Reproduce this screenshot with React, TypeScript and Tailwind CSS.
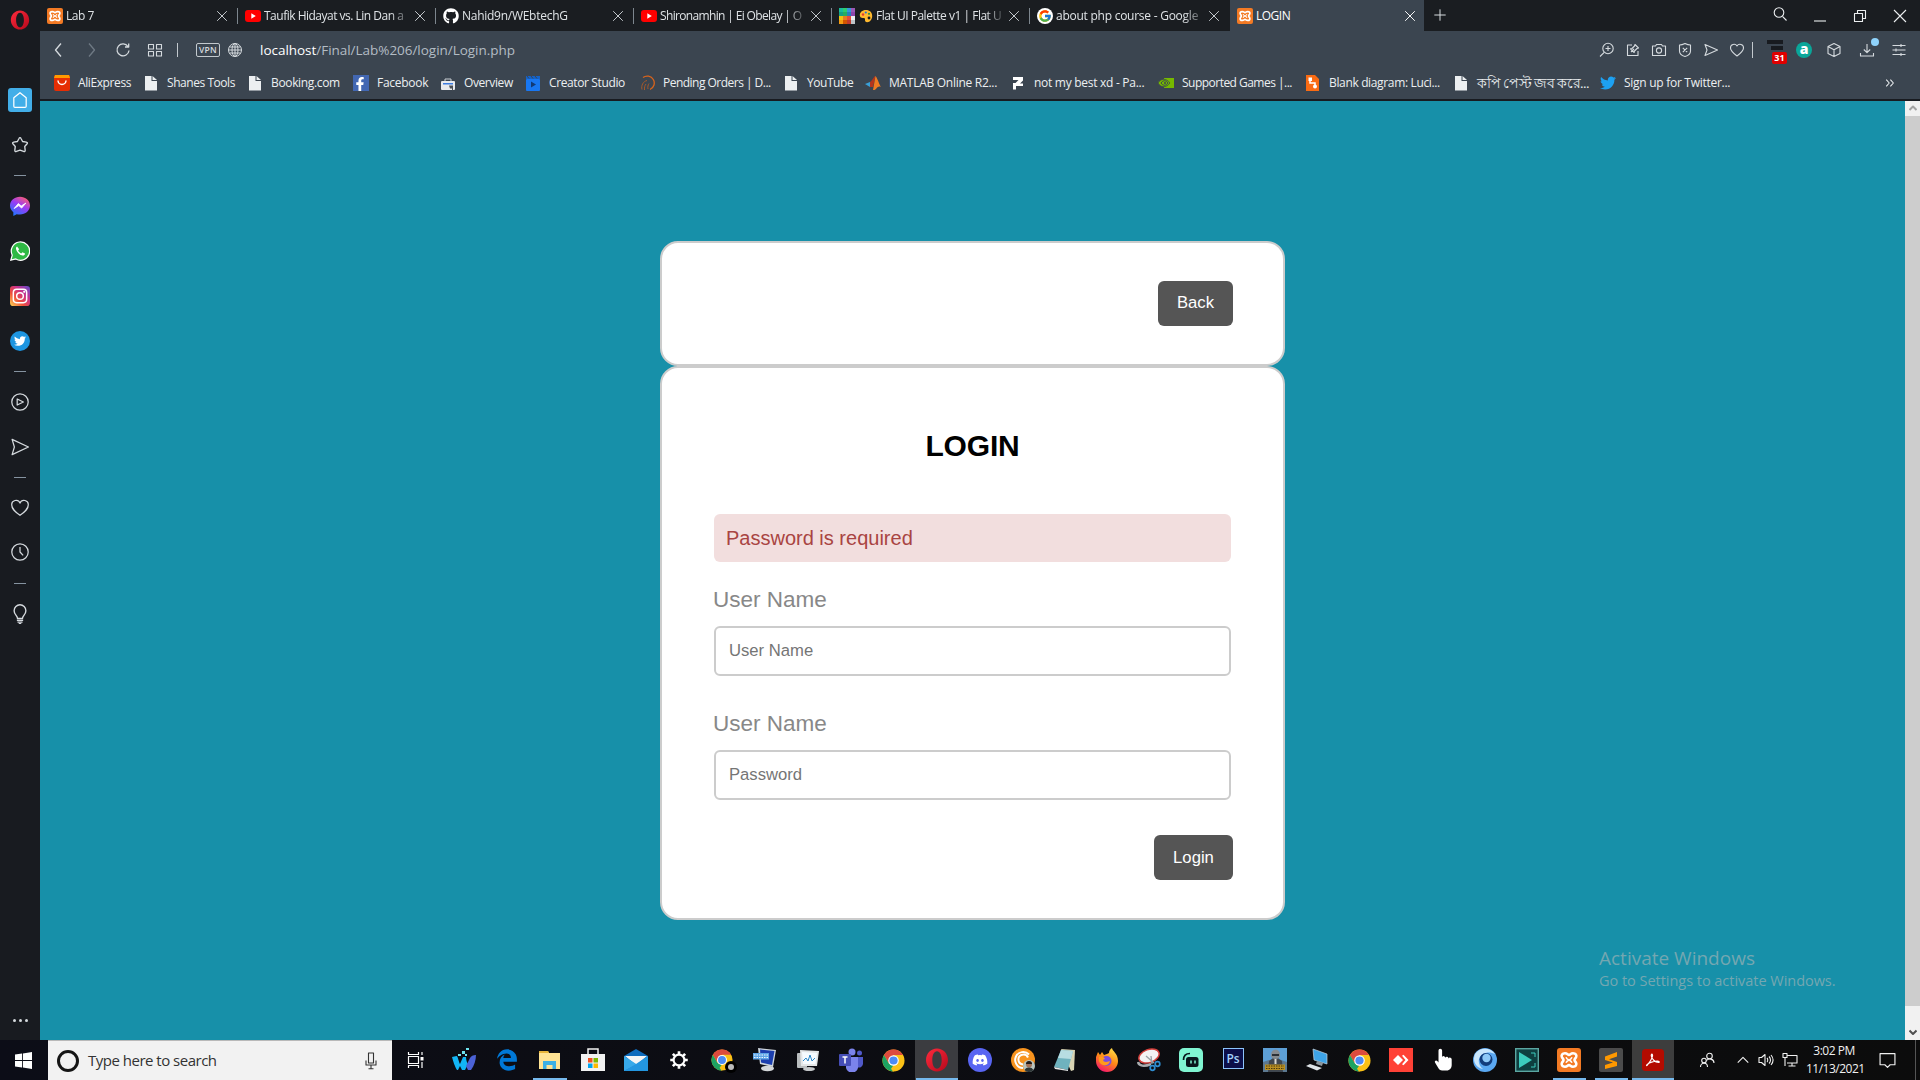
import React, { ReactNode } from "react";
import { FaGithub, FaTwitter, FaDiscord, FaFacebookF } from "react-icons/fa";
import { FaEdgeLegacy } from "react-icons/fa6";
import { FcGoogle } from "react-icons/fc";

type P = { className?: string; children?: ReactNode; box?: string; sw?: number };

/* Thin outlined glyph used across the toolbar and sidebar */
function Line({ className = "size-4", children, box = "0 0 16 16", sw = 1.1 }: P) {
  return (
    <svg className={className} viewBox={box} fill="none" stroke="currentColor" strokeWidth={sw} strokeLinejoin="round">
      {children}
    </svg>
  );
}
function Art({ className = "size-6", children, box = "0 0 24 24" }: P) {
  return (
    <svg className={className} viewBox={box}>
      {children}
    </svg>
  );
}

const Xampp = ({ className = "size-4" }: P) => (
  <Art className={className}>
    <rect width="24" height="24" rx="3" fill="#f37a24" />
    <path
      d="M8 5.300c-2.800 0-4 2-3 4 .6 1.100 1.500 1.700 1.500 2.700s-.9 1.600-1.500 2.700c-1 2 .2 4 3 4 2.400 0 2.600-1.600 4-1.600s1.600 1.600 4 1.600c2.800 0 4-2 3-4-.6-1.100-1.500-1.700-1.500-2.700s.9-1.600 1.500-2.700c1-2-.2-4-3-4-2.400 0-2.600 1.600-4 1.600S10.400 5.300 8 5.300z"
      fill="none"
      stroke="#fff"
      strokeWidth="2.600"
      strokeLinejoin="round"
    />
    <path d="M9 9.200c.8 1.800 1.600 2.300 3 2.800 1.400-.5 2.200-1 3-2.800M9 14.800c.8-1.800 1.600-2.300 3-2.800 1.400.5 2.200 1 3 2.800" fill="none" stroke="#fff" strokeWidth="1.600" />
  </Art>
);
const YouTube = () => (
  <Art className="size-4" box="0 0 16 16">
    <rect y="2" width="16" height="12" rx="3" fill="#f00" />
    <path d="M6.300 5.200v5.600L10.800 8z" fill="#fff" />
  </Art>
);
const FlatPalette = () => (
  <Art className="size-4" box="0 0 16 16">
    <path fill="#1abc9c" d="M0 0h4v4H0z" />
    <path fill="#2ecc71" d="M4 0h4v4H4z" />
    <path fill="#3498db" d="M8 0h4v4H8z" />
    <path fill="#9b59b6" d="M12 0h4v4h-4z" />
    <path fill="#16a085" d="M0 4h4v4H0z" />
    <path fill="#27ae60" d="M4 4h4v4H4z" />
    <path fill="#2980b9" d="M8 4h4v4H8z" />
    <path fill="#8e44ad" d="M12 4h4v4h-4z" />
    <path fill="#f1c40f" d="M0 8h4v4H0z" />
    <path fill="#e67e22" d="M4 8h4v4H4z" />
    <path fill="#e74c3c" d="M8 8h4v4H8z" />
    <path fill="#ecf0f1" d="M12 8h4v4h-4z" />
    <path fill="#f39c12" d="M0 12h4v4H0z" />
    <path fill="#d35400" d="M4 12h4v4H4z" />
    <path fill="#c0392b" d="M8 12h4v4H8z" />
    <path fill="#bdc3c7" d="M12 12h4v4h-4z" />
  </Art>
);
const Painter = () => (
  <Art className="h-3.5 w-3.5 shrink-0" box="0 0 14 14">
    <path d="M7 1C3 1 .8 3.500.8 6.300c0 2.400 2 2.900 3.400 2.700 1.300-.2 2 .4 1.800 1.500-.2 1.500.5 2.700 2.200 2.700 3 0 5-3 5-6.200C13.200 3.300 10.600 1 7 1z" fill="#ffb92e" />
    <circle cx="4" cy="5.500" r="1.200" fill="#e53935" />
    <circle cx="6.800" cy="3.500" r="1.100" fill="#1e6fd9" />
    <circle cx="10" cy="4.800" r="1.100" fill="#2b9348" />
    <circle cx="10" cy="9" r="1.400" fill="#1a1d21" />
  </Art>
);
const Page = () => (
  <Art className="size-4" box="0 0 16 16">
    <path d="M2 1h6.500v5H14v9.500H2z" fill="#eceff1" />
    <path d="M9.500 1v4H14z" fill="#eceff1" />
  </Art>
);
const OperaLogo = ({ className = "size-5" }: P) => (
  <Art className={className}>
    <defs>
      <linearGradient id="op" x1="0" y1="0" x2="1" y2="1">
        <stop offset="0" stopColor="#ff2b3d" />
        <stop offset="1" stopColor="#b4081b" />
      </linearGradient>
    </defs>
    <path
      fillRule="evenodd"
      fill="url(#op)"
      d="M12 .5C5.900.5 1 5.600 1 12s4.900 11.500 11 11.500S23 18.400 23 12 18.100.5 12 .5zm0 2.700c2.900 0 4.700 3.900 4.700 8.800s-1.800 8.800-4.700 8.800S7.300 16.900 7.300 12 9.100 3.200 12 3.200z"
    />
  </Art>
);
const Chrome = ({ className = "size-6" }: P) => (
  <Art className={className}>
    <circle cx="12" cy="12" r="11.500" fill="#fbc116" />
    <path d="M2 6.300A11.500 11.500 0 0 1 22 6.300H12L7 14.800z" fill="#dd4b3e" />
    <path d="M2 6.300 7 14.900 12 17.500l-.6 6A11.500 11.500 0 0 1 2 6.300z" fill="#1da362" />
    <path d="M17 14.800 12 23.500h-.6l-2-3L12 17z" fill="#fbc116" />
    <circle cx="12" cy="12" r="5.500" fill="#fff" />
    <circle cx="12" cy="12" r="4.300" fill="#4c8bf5" />
  </Art>
);

type Tab = { w: string; icon: ReactNode; label: string; text?: string };
const tabs: Tab[] = [
  { w: "w-[198px]", icon: <Xampp />, label: "Lab 7", text: "tracking-[-0.5px]" },
  { w: "w-[198px]", icon: <YouTube />, label: "Taufik Hidayat vs. Lin Dan a", text: "tracking-[-0.5px]" },
  { w: "w-[198px]", icon: <FaGithub className="size-4 text-white" />, label: "Nahid9n/WEbtechG", text: "tracking-[-0.27px]" },
  { w: "w-[198px]", icon: <YouTube />, label: "Shironamhin | Ei Obelay | O", text: "tracking-[-0.65px]" },
  { w: "w-[198px]", icon: <FlatPalette />, label: "Flat UI Palette v1 | Flat U", text: "tracking-[-0.48px]" },
  { w: "w-[200px]", icon: <FcGoogle className="size-4 rounded-full bg-white p-px" />, label: "about php course - Google", text: "tracking-[-0.25px]" },
];

function TabBar() {
  return (
    <div className="flex h-[31px] bg-[#1a1d21] text-[12px] text-[#dfe3e6]">
      {tabs.map((t, i) => (
        <div key={t.label} className={`flex h-full shrink-0 items-center pl-[7px] ${t.w}`}>
          {t.icon}
          {i === 4 && <span className="ml-1 flex"><Painter /></span>}
          <span
            className={`ml-[3px] flex-1 overflow-hidden whitespace-nowrap [mask-image:linear-gradient(to_right,black_88%,#0004)] ${t.text ?? ""}`}
          >
            {t.label}
          </span>
          <Line className="ml-1.5 size-3.5 text-[#c9ced2]">
            <path d="M2.500 2.500l11 11M13.500 2.500l-11 11" />
          </Line>
          <span className={`ml-2 h-4 w-px ${i === 5 ? "bg-transparent" : "bg-[#7d868e]"}`} />
        </div>
      ))}
      <div className="flex h-full w-[194px] shrink-0 items-center bg-[#3b4550] pl-[7px] text-white">
        <Xampp />
        <span className="ml-[3px] flex-1 tracking-[-0.5px]">LOGIN</span>
        <Line className="mr-[7px] size-3.5">
          <path d="M2.500 2.500l11 11M13.500 2.500l-11 11" />
        </Line>
      </div>
      <div className="flex flex-1 items-center pl-[9px]">
        <Line className="mt-[-2px] size-3.5">
          <path d="M8 1.500v13M1.500 8h13" />
        </Line>
      </div>
      <div className="flex items-center pr-[12px] text-[#eceff1]">
        <Line className="mt-[-3px] mr-6 size-4">
          <circle cx="7" cy="6.500" r="4.800" />
          <path d="M10.500 10.300l4 4.200" />
        </Line>
        <Line className="mr-6 size-4">
          <path d="M2 13h12" />
        </Line>
        <Line className="mr-6 size-4">
          <path d="M2.500 5.500h8v8h-8zM5.500 5.500v-3h8v8h-3" />
        </Line>
        <Line className="size-4">
          <path d="M2 2l12 12M14 2L2 14" />
        </Line>
      </div>
    </div>
  );
}

function AddressBar() {
  return (
    <div className="flex h-[38px] items-center pl-[11px] text-[#d5dade]">
      <Line sw={1.300}>
        <path d="M10 1.500L4.500 8l5.500 6.500" />
      </Line>
      <Line className="ml-4 size-4 text-[#6f7a84]" sw={1.300}>
        <path d="M6 1.500L11.500 8 6 14.500" />
      </Line>
      <Line className="ml-4 size-4" sw={1.300}>
        <path d="M13 4.500A6 6 0 1 0 14 8.500M13.700 1.500v3.500H10" />
      </Line>
      <Line className="ml-4 size-4">
        <path d="M1.500 2.500h5v4.500h-5zM9.500 2.500h5v4.500h-5zM1.500 9.500h5v4.500h-5zM9.500 9.500h5v4.500h-5z" />
      </Line>
      <span className="ml-[14px] h-3.5 w-px bg-[#c3c9ce]" />
      <span className="ml-[18px] flex h-[14px] w-6 items-center justify-center rounded-[2px] border border-[#c3c9ce] text-[8.500px] font-semibold tracking-[0.3px]">
        VPN
      </span>
      <Line className="ml-[7px] size-4" sw={1}>
        <circle cx="8" cy="8" r="6.500" />
        <ellipse cx="8" cy="8" rx="3" ry="6.500" />
        <path d="M8 1.500v13M1.500 8h13M2.500 5h11M2.500 11h11" />
      </Line>
      <span className="ml-[17px] text-[13.500px] tracking-[-0.03px] text-[#b3bcc4]">
        <span className="text-white">localhost</span>/Final/Lab%206/login/Login.php
      </span>
      <div className="ml-auto flex items-center gap-2.5 pr-[13px]">
        <Line>
          <circle cx="9" cy="6.500" r="5.200" />
          <path d="M5.200 10.300L1 14.500M9 4v5M6.500 6.500h5" />
        </Line>
        <Line>
          <path d="M7 3H2.500v10.500H13V9M6 10l3-3M10 2.500l3.500 3.500-1.500.5-2.500 2.500-.3 1.500-3.700-3.700 1.500-.3L9.500 4z" />
        </Line>
        <Line>
          <path d="M1.500 4h3l1-1.500h5l1 1.500h3v9.500h-13z" />
          <circle cx="8" cy="8.500" r="2.600" />
        </Line>
        <Line>
          <path d="M8 1.500c2 1 4 1.500 5.500 1.500v6c0 3-2.500 4.700-5.500 5.500-3-.8-5.500-2.500-5.500-5.500V3C4 3 6 2.500 8 1.500zM5.800 5.800l4.400 4.400M10.200 5.800l-4.400 4.400" />
        </Line>
        <Line>
          <path d="M2 2.500L14.500 8 2 13.500 4 8z" />
        </Line>
        <Line>
          <path d="M8 14C4 11 1.500 9 1.500 6A3.500 3.500 0 0 1 8 4a3.500 3.500 0 0 1 6.500 2C14.500 9 12 11 8 14z" />
        </Line>
        <span className="-ml-[3px] h-4 w-px bg-[#c3c9ce]" />
        <span className="relative ml-1 mr-px h-5 w-4">
          <span className="absolute top-0 left-0 h-1 w-4 bg-[#181b20]" />
          <span className="absolute top-1.5 left-1 h-1 w-3 bg-[#181b20]" />
          <span className="absolute top-3 left-[5px] flex h-3 w-[15px] items-center justify-center rounded-[2px] bg-[#e00000] text-[9px] font-bold text-white">
            31
          </span>
        </span>
        <span className="ml-[2px] flex size-4 items-center justify-center rounded-full bg-[#0aa699] pb-0.5 text-[14px] leading-none font-extrabold text-white">
          a
        </span>
        <Line className="ml-1 size-4">
          <path d="M8 1.500l6 3v7l-6 3-6-3v-7zM2 4.500l6 3.200 6-3.200M8 7.700v6.800" />
        </Line>
        <span className="relative mr-1.5 ml-[7px] flex">
          <Line>
            <path d="M8 2v8.500M4.800 7.500L8 10.700l3.200-3.200M1.500 11v3h13v-3" />
          </Line>
          <span className="absolute -top-[4px] left-[12px] size-2 rounded-full bg-[#8fd3fb]" />
        </span>
        <Line>
          <path d="M1.500 3.500h13M1.500 8h13M1.500 12.500h13M10 2v3M5 6.500v3M10 11v3" />
        </Line>
      </div>
    </div>
  );
}

type Mark = { w: string; icon: ReactNode; label: string; t?: string };
const marks: Mark[] = [
  {
    w: "w-[89px]",
    label: "AliExpress",
    t: "tracking-[-0.4px]",
    icon: (
      <Art className="size-4" box="0 0 16 16">
        <rect width="16" height="16" rx="2" fill="#e62e04" />
        <path d="M1 0h14l1 3H0z" fill="#ff9a00" />
        <path d="M4 5.500a4 4 0 0 0 8 0" fill="none" stroke="#fff" strokeWidth="1.500" />
      </Art>
    ),
  },
  { w: "w-[104px]", label: "Shanes Tools", t: "tracking-[-0.45px]", icon: <Page /> },
  { w: "w-[106px]", label: "Booking.com", t: "tracking-[-0.35px]", icon: <Page /> },
  {
    w: "w-[87px]",
    label: "Facebook",
    icon: (
      <span className="flex size-4 items-end justify-end bg-[#4267b2]">
        <FaFacebookF className="mr-0.5 size-3.5 text-white" />
      </span>
    ),
  },
  {
    w: "w-[85px]",
    label: "Overview",
    t: "tracking-[-0.4px]",
    icon: (
      <Art className="size-4" box="0 0 16 16">
        <path d="M5 6V4h6v2" fill="none" stroke="#c9ced2" />
        <rect x="1" y="6" width="14" height="9" rx="1" fill="#e8eaed" />
        <path d="M3 8h10v1.500H3z" fill="#3d7de0" />
        <path d="M9 10.500h4v5h-1v-2h-2z" fill="#4a4f55" />
      </Art>
    ),
  },
  {
    w: "w-[114px]",
    label: "Creator Studio",
    t: "tracking-[-0.38px]",
    icon: (
      <Art className="size-4" box="0 0 16 16">
        <rect x="1" y="4" width="14" height="12" rx="1" fill="#1877f2" />
        <path d="M1 1h14v3H1z" fill="#1462c9" />
        <path d="M2 1l2 2.500M6 1l2 2.500M10 1l2 2.500" stroke="#3b4550" strokeWidth="1" />
        <path d="M6 6.500v6L11 9.500z" fill="#123a75" />
      </Art>
    ),
  },
  {
    w: "w-[144px]",
    label: "Pending Orders | D...",
    t: "tracking-[-0.52px]",
    icon: (
      <Art className="size-4" box="0 0 16 16">
        <path d="M4 2.500A7 7 0 1 1 11 14.500" fill="none" stroke="#d9641c" strokeWidth="1.300" />
        <path d="M3 14.500c-1-4 1-8 5-9M5.500 15c0-3 0-4 1.500-6M9 14c-.5-2 0-4 1-5.500" fill="none" stroke="#a85a2a" />
      </Art>
    ),
  },
  { w: "w-[82px]", label: "YouTube", t: "tracking-[-0.45px]", icon: <Page /> },
  {
    w: "w-[145px]",
    label: "MATLAB Online R2...",
    t: "tracking-[-0.28px]",
    icon: (
      <Art className="size-4" box="0 0 16 16">
        <path d="M0 9l5-2 3 2-3 3z" fill="#3aa0d8" />
        <path d="M5 7c2-1 4-6 5.500-6L8 12l-3 0z" fill="#b5351c" />
        <path d="M10.500 1C12 2 14 9 16 12c-2-1-3-.5-5 2-1 1-2 1-3 1z" fill="#f07c22" />
      </Art>
    ),
  },
  {
    w: "w-[148px]",
    label: "not my best xd - Pa...",
    icon: (
      <Art className="size-4" box="0 0 16 16">
        <path d="M3 2h10v3.500l-3 3h3V11H6v3.500H3V8h2.500l3-3H3z" fill="#fff" />
      </Art>
    ),
  },
  {
    w: "w-[147px]",
    label: "Supported Games |...",
    t: "tracking-[-0.52px]",
    icon: (
      <Art className="size-4" box="0 0 16 16">
        <path d="M6 3h10v10H6z" fill="#76b900" />
        <path d="M0 8c3-5 8-5 12 0-4 5-9 5-12 0z" fill="#76b900" stroke="#3b4550" strokeWidth=".8" />
        <path d="M3 8c2-3 5-3 7 0-2 3-5 3-7 0z" fill="none" stroke="#3b4550" />
        <circle cx="7" cy="8" r="1" fill="#3b4550" />
      </Art>
    ),
  },
  {
    w: "w-[148px]",
    label: "Blank diagram: Luci...",
    t: "tracking-[-0.35px]",
    icon: (
      <Art className="size-4" box="0 0 16 16">
        <path d="M1 0h9l4 4v12H1z" fill="#f96b13" />
        <path d="M5 4v4h5v3" fill="none" stroke="#fff" strokeWidth="1.500" />
        <rect x="3.500" y="2.500" width="3.500" height="3.500" fill="#fff" />
        <circle cx="10" cy="11.500" r="2" fill="#fff" />
      </Art>
    ),
  },
  { w: "w-[147px]", label: "কপি পেস্ট জব করে...", t: "text-[13.5px] leading-4 font-medium tracking-[-0.5px]", icon: <Page /> },
  { w: "w-[150px]", label: "Sign up for Twitter...", icon: <FaTwitter className="size-4 text-[#1da1f2]" /> },
];

function Bookmarks() {
  return (
    <div className="flex h-[28px] items-center pl-[14px] text-[12px] tracking-[-0.28px] text-[#eceff1]">
      {marks.map((m) => (
        <div key={m.label} className={`flex shrink-0 items-center gap-2 whitespace-nowrap ${m.w}`}>
          <span className="flex size-4 shrink-0">{m.icon}</span>
          <span className={m.t ?? ""}>{m.label}</span>
        </div>
      ))}
      <Line className="mr-6 ml-auto size-3" sw={1.400}>
        <path d="M3 3.500L7 8l-4 4.500M8.500 3.500l4 4.500-4 4.500" />
      </Line>
    </div>
  );
}

const Dash = ({ className = "" }: P) => <span className={`h-px w-3 bg-[#8593a0] ${className}`} />;

function Sidebar() {
  return (
    <aside className="flex w-10 shrink-0 flex-col items-center bg-[#181b20] text-[#d5dade]">
      <OperaLogo className="mt-[10px] size-5" />
      <span className="mt-[58px] flex h-6 w-6 items-center justify-center rounded-[3px] bg-[#42aee8] text-white">
        <Line className="size-[18px]">
          <path d="M2.500 6L8 1.500 13.500 6v7.500a1 1 0 0 1-1 1h-9a1 1 0 0 1-1-1z" />
        </Line>
      </span>
      <Line className="mt-[24px] size-[18px]" sw={1.200}>
        <path d="M8 1.500Q8.600 1.500 9 2.400L10.300 4.900 13.600 5.400Q15.200 5.800 14.300 6.900L12.200 9.300 12.600 12.600Q12.600 14.300 11.200 13.700L8 12.500 4.800 13.700Q3.400 14.300 3.400 12.600L3.800 9.300 1.700 6.900Q.8 5.800 2.400 5.400L5.700 4.900 7 2.400Q7.400 1.500 8 1.500z" />
      </Line>
      <Dash className="mt-[21px]" />
      <Art className="mt-5 size-5">
        <defs>
          <linearGradient id="ms" x1=".2" y1="1" x2=".8" y2="0">
            <stop offset="0" stopColor="#1a78ff" />
            <stop offset=".55" stopColor="#9a3bf5" />
            <stop offset="1" stopColor="#ff5f6d" />
          </linearGradient>
        </defs>
        <path d="M12 1C5.500 1 0 5.600 0 11.500c0 3.500 1.500 6 4 8V24l4-2.200c1.300.3 2.600.5 4 .5 6.500 0 12-4.800 12-10.800S18.500 1 12 1z" fill="url(#ms)" />
        <path d="M5 15l5-6 3.500 3L19 8.500l-5 6-3.500-3z" fill="#fff" stroke="#fff" strokeLinejoin="round" />
      </Art>
      <Art className="mt-[25px] size-5">
        <path d="M1 23l1.700-6A11 11 0 1 1 7 21.600z" fill="#2fb944" stroke="#fff" strokeWidth="1.500" />
        <path d="M8.500 6.500c-2 1-1.500 3.500 0 6s4 4.500 6.500 5c2 .3 3.300-1.500 3-2.500l-3-1.500-1.500 1.500c-1.500-.5-3-2-3.800-3.600L11 10z" fill="#fff" />
      </Art>
      <Art className="mt-[25px] size-5">
        <defs>
          <linearGradient id="ig" x1="0" y1="1" x2="1" y2="0">
            <stop offset="0" stopColor="#feda55" />
            <stop offset=".35" stopColor="#f0503a" />
            <stop offset=".65" stopColor="#c8318d" />
            <stop offset="1" stopColor="#5a4fd0" />
          </linearGradient>
        </defs>
        <rect width="24" height="24" rx="4" fill="url(#ig)" />
        <rect x="4" y="4" width="16" height="16" rx="4" fill="none" stroke="#fff" strokeWidth="1.800" />
        <circle cx="12" cy="12" r="4" fill="none" stroke="#fff" strokeWidth="1.800" />
        <circle cx="17" cy="7" r="1.300" fill="#fff" />
      </Art>
      <span className="mt-[25px] flex size-5 shrink-0 items-center justify-center rounded-full bg-[#1d95e0]">
        <FaTwitter className="size-3 text-white" />
      </span>
      <Dash className="mt-[20px]" />
      <Line className="mt-[21px] size-[18px]">
        <circle cx="8" cy="8" r="7.300" />
        <path d="M5.500 5.300v5.400L11 8z" />
      </Line>
      <Line className="mt-[27px] size-[18px]">
        <path d="M1 1.200L15.500 8 1 14.800 3 8z" />
      </Line>
      <Dash className="mt-[21px]" />
      <Line className="mt-[21px] size-[18px]">
        <path d="M8 14.500C4 11.500.7 9 .7 5.500A3.800 3.800 0 0 1 8 3.600a3.800 3.800 0 0 1 7.300 1.900C15.300 9 12 11.500 8 14.500z" />
      </Line>
      <Line className="mt-[26px] size-[18px]">
        <circle cx="8" cy="8" r="7.300" />
        <path d="M8 3.500V8l2.800 3" />
      </Line>
      <Dash className="mt-[22px]" />
      <Line className="mt-[20px] size-5">
        <path d="M6 11.500C6 9.500 3.300 8.500 3.300 5.300a4.700 4.700 0 0 1 9.400 0C12.700 8.500 10 9.500 10 11.500zM5.500 13h5M6 14.500h4M7 15.700h2" />
      </Line>
      <span className="mt-auto mb-[18px] flex gap-[3px]">
        <i className="size-[3px] rounded-full bg-[#d5dade]" />
        <i className="size-[3px] rounded-full bg-[#d5dade]" />
        <i className="size-[3px] rounded-full bg-[#d5dade]" />
      </span>
    </aside>
  );
}

function Field({ label, hint }: { label: string; hint: string }) {
  return (
    <label className="block">
      <span className="-ml-px block h-[26px] text-[22.500px] leading-[26px] text-[#888]">{label}</span>
      <span className="mt-[13px] flex h-[50px] items-center rounded-[6px] border-2 border-[#ccc] bg-white px-[13px] pb-px text-[16.670px] text-[#757575]">
        {hint}
      </span>
    </label>
  );
}

function PageBody() {
  return (
    <main className="relative flex flex-1 bg-[#1790a9] font-['Liberation_Sans',Arial,sans-serif]">
      <div className="flex flex-1 flex-col items-center pt-[140px]">
        <section className="flex h-[125px] w-[625px] justify-end rounded-[18px] border-2 border-[#ccc] bg-white pt-[38px] pr-[50px]">
          <button className="flex h-[45px] w-[75px] items-center justify-center rounded-[6px] bg-[#555] pb-0.5 text-[16.670px] text-white">
            Back
          </button>
        </section>
        <section className="flex h-[554px] w-[625px] flex-col rounded-[18px] border-2 border-[#ccc] bg-white px-[52px] pt-[60px]">
          <h2 className="h-9 text-center text-[30px] leading-9 font-bold tracking-[-0.15px] text-black">LOGIN</h2>
          <p className="mt-[50px] flex h-12 items-center rounded-[6px] bg-[#f2dede] pl-[12px] text-[20px] text-[#a94442]">
            Password is required
          </p>
          <div className="mt-[25px] flex flex-col gap-[35px]">
            <Field label="User Name" hint="User Name" />
            <Field label="User Name" hint="Password" />
          </div>
          <button className="mt-[35px] -mr-0.5 flex h-[45px] w-[79px] items-center justify-center self-end rounded-[6px] bg-[#555] pb-px text-[16.670px] text-white">
            Login
          </button>
        </section>
      </div>
      <div className="flex w-[15px] flex-col bg-[#f1f1f1]">
        <Line className="mx-auto my-1 h-[7px] w-2 text-[#a3a3a3]" box="0 0 8 7" sw={2}>
          <path d="M.5 5L4 1.500 7.500 5" />
        </Line>
        <span className="h-[890px] bg-[#cdcdcd]" />
        <Line className="mx-auto mt-auto mb-1 h-[7px] w-2 text-[#505050]" box="0 0 8 7" sw={2}>
          <path d="M.5 1.500L4 5 7.500 1.500" />
        </Line>
      </div>
      <div className="absolute top-[843px] left-[1559px] font-['Open_Sans',sans-serif] whitespace-nowrap text-[#74a7b1]">
        <p className="text-[19px] leading-[28px]">Activate Windows</p>
        <p className="text-[14.500px] leading-[18px] tracking-[-0.03px]">Go to Settings to activate Windows.</p>
      </div>
    </main>
  );
}

const taskA: { n: string; bar?: string; el: ReactNode }[] = [
  {
    n: "waves",
    el: (
      <Art>
        <path d="M0 9l4.500-1C6 8 7 15 8 16l3-7h3c0 3 1 6 2 7l-3 6h-3l-2-4-2 4H5C3 19 1 13 0 9z" fill="#12b5f5" />
        <path d="M15 16l3-6c1-2 3-3 6-3 0 5-2 11-5 15h-3l-2-4z" fill="#4b62d6" />
        <path d="M6 6h3v2H6zM10 3h3v3h-3zM14 0h3v2h-3zM13 6h2v2h-2z" fill="#6fe3ee" />
      </Art>
    ),
  },
  { n: "edge", el: <FaEdgeLegacy className="size-[22px] text-[#0078d7]" /> },
  {
    n: "files",
    bar: "w-[34px]",
    el: (
      <Art>
        <path d="M1 3h9l1 2h11v16H1z" fill="#ffe394" />
        <path d="M1 3h9l1 2H1z" fill="#e8b53a" />
        <path d="M5 13h13v8h-3.500v-4h-6v4H5z" fill="#3bb0e5" />
      </Art>
    ),
  },
  {
    n: "store",
    el: (
      <Art>
        <path d="M7 7V1h10v6" fill="none" stroke="#f2f2f2" strokeWidth="1.500" />
        <path d="M0 6h24v17H0z" fill="#f2f2f2" />
        <path d="M7 10h4.500v4.500H7z" fill="#f25022" />
        <path d="M12.500 10H17v4.500h-4.500z" fill="#7fba00" />
        <path d="M7 15.500h4.500V20H7z" fill="#00a4ef" />
        <path d="M12.500 15.500H17V20h-4.500z" fill="#ffb900" />
      </Art>
    ),
  },
  {
    n: "mail",
    el: (
      <Art>
        <path d="M0 8l12-7 12 7v15H0z" fill="#0f6cbd" />
        <path d="M1 8h22l-11 9z" fill="#f5f5f5" />
        <path d="M0 8l13 8.500L0 23z" fill="#37a9ea" />
        <path d="M24 8v15H0l12-7z" fill="#2396e0" />
      </Art>
    ),
  },
  {
    n: "settings",
    el: (
      <Art className="size-5">
        <g stroke="#fff" fill="none">
          <circle cx="12" cy="12" r="6.500" strokeWidth="2.600" />
          <path d="M12 1.500v4M12 18.500v4M1.500 12h4M18.500 12h4M4.600 4.600l2.800 2.800M16.600 16.600l2.800 2.800M19.400 4.600l-2.800 2.800M7.400 16.600l-2.800 2.800" strokeWidth="3.200" />
        </g>
      </Art>
    ),
  },
  {
    n: "chrome-a",
    el: (
      <span className="relative flex">
        <Chrome className="size-[22px]" />
        <span className="absolute -right-1 -bottom-0.5 flex size-3 items-center justify-center rounded-full bg-black">
          <i className="size-1.5 rounded-full bg-[#bbb]" />
        </span>
      </span>
    ),
  },
  {
    n: "keyboard",
    el: (
      <Art>
        <path d="M5 0l18 2-3 17-13-3z" fill="#cfd6dc" />
        <path d="M7 1.500l14.500 1.500-2.500 14-11-2.500z" fill="#1c3fae" />
        <path d="M0 5h16v6.500H0z" fill="#5fa6e8" />
        <path d="M1 7h14M1 9.500h14" stroke="#fff" strokeWidth=".9" strokeDasharray="1.500 1" />
        <ellipse cx="14.500" cy="20.500" rx="6.500" ry="2.700" fill="#d4d7d9" />
      </Art>
    ),
  },
  {
    n: "monitor",
    el: (
      <Art>
        <rect x="1" y="5" width="10" height="15" rx="1" fill="#b9bdbf" />
        <path d="M4 2l19 1-2 15H5z" fill="#e4e6e7" />
        <path d="M6 4l15 1-1.500 11H7z" fill="#f6fbff" />
        <path d="M7 13l3-3 2 3 2-6 2 6 3-3" fill="none" stroke="#2a86c8" />
        <ellipse cx="13" cy="21" rx="6" ry="2" fill="#c3c6c8" />
      </Art>
    ),
  },
  {
    n: "teams",
    el: (
      <Art>
        <circle cx="13" cy="4" r="3.500" fill="#7b83eb" />
        <circle cx="20.500" cy="5" r="2.500" fill="#5059c9" />
        <path d="M16 9h8v7a4 4 0 0 1-6 3z" fill="#5059c9" />
        <path d="M7 9h12v8a6 6 0 0 1-12 3z" fill="#7b83eb" />
        <rect y="6" width="12" height="12" rx="1" fill="#464eb8" />
        <path d="M3.500 9h5M6 9v6.500" stroke="#fff" strokeWidth="1.500" />
      </Art>
    ),
  },
  { n: "chrome-b", el: <Chrome className="size-[23px]" /> },
  { n: "opera", bar: "w-[42px]", el: <OperaLogo className="size-6" /> },
  {
    n: "discord",
    el: (
      <span className="flex size-6 items-center justify-center rounded-full bg-[#5865f2]">
        <FaDiscord className="size-4 text-white" />
      </span>
    ),
  },
  {
    n: "coin",
    el: (
      <Art>
        <circle cx="12" cy="12" r="12" fill="#f7931e" />
        <path d="M18 6.500A8 8 0 1 0 12 20M17 9.500a5 5 0 1 0-5 7" fill="none" stroke="#fff" strokeWidth="2" />
        <circle cx="18" cy="18" r="6" fill="#b9c4be" />
        <path d="M13.500 22a5 5 0 0 1 9 0 6 6 0 0 1-9 0z" fill="#2c3536" />
        <circle cx="18" cy="16.500" r="3" fill="#a1735a" />
        <path d="M15 16a3 3 0 0 1 6 0z" fill="#201a18" />
      </Art>
    ),
  },
];

const Pubg = (
  <Art>
    <path d="M0 0h24v24H0z" fill="#5d9fd6" />
    <path d="M0 14l6-2h12l6 2v10H0z" fill="#5c7890" />
    <path d="M5 24l1-11 4-3h5l4 3 1 11z" fill="#3f464e" />
    <path d="M8 7a4.500 5.500 0 0 1 9 0c0 3-2 4-4.500 4S8 10 8 7z" fill="#868b90" />
    <path d="M9 6h7v2H9z" fill="#2c3036" />
    <path d="M11.500 11h2v5h-2z" fill="#d9d9d2" />
    <path d="M2 16.500h20v5.500H2z" fill="#b98f22" />
    <path d="M3 18h18M3 20.500h18" stroke="#4b3a0c" strokeWidth="1" strokeDasharray="1.500 1" />
  </Art>
);

const taskB: { n: string; bar?: boolean; on?: boolean; el: ReactNode }[] = [
  {
    n: "notepad",
    el: (
      <Art>
        <path d="M8 1l14 1-1 20-3 1z" fill="#d9d4b4" />
        <path d="M8 2l12 1-5 19L1 19z" fill="#6fb2be" />
        <path d="M8 2l12 1-2 8L5 10z" fill="#b8dde2" />
        <path d="M1 19l14 3v1L2 21z" fill="#e7e9e9" />
      </Art>
    ),
  },
  {
    n: "firefox",
    el: (
      <Art>
        <defs>
          <linearGradient id="ff" x1=".8" y1="0" x2=".3" y2="1">
            <stop offset="0" stopColor="#ffe14a" />
            <stop offset=".5" stopColor="#ff8a16" />
            <stop offset="1" stopColor="#f5156c" />
          </linearGradient>
        </defs>
        <path d="M1 9l2-5 2 3 2-3 2 3c2-1 4-1 5-2 0-2 1-4 3-5 0 3 6 5 6 13a11 11 0 0 1-22 0c0-1 0-3 0-4z" fill="url(#ff)" />
        <circle cx="11.500" cy="13" r="5" fill="#7a4ee0" />
        <path d="M4 9c3-1 5 0 6 2-3 0-2 3 1 3 2 0 3-1 4-1-1 4-4 5-7 4-3-1-5-4-4-8z" fill="#ff9a1c" />
      </Art>
    ),
  },
  {
    n: "snip",
    el: (
      <Art>
        <path d="M1 14c1 4 6 5 13 2" stroke="#a9adb0" fill="none" strokeWidth="2.500" />
        <ellipse cx="12" cy="8" rx="10.500" ry="6.500" transform="rotate(-20 12 8)" fill="#f3f3f3" stroke="#d4403c" strokeWidth="1.500" />
        <path d="M9 8l8 7M14 8l1 8" stroke="#9aa1a6" strokeWidth="1.300" />
        <circle cx="15.500" cy="20" r="2.300" fill="none" stroke="#2f8dd0" strokeWidth="1.700" />
        <circle cx="20.500" cy="16" r="2.300" fill="none" stroke="#2f8dd0" strokeWidth="1.700" />
      </Art>
    ),
  },
  {
    n: "streamlabs",
    el: (
      <Art>
        <rect width="24" height="24" rx="5" fill="#80f5d2" />
        <rect x="7" y="9" width="12.500" height="10" rx="2.500" fill="#09161d" />
        <path d="M4.500 12C4.500 8 7 5.500 11 5.500" fill="none" stroke="#09161d" strokeWidth="1.700" />
        <path d="M12 12.500v3M16 12.500v3" stroke="#80f5d2" strokeWidth="1.500" />
      </Art>
    ),
  },
  {
    n: "photoshop",
    el: (
      <span className="-mt-[3px] flex size-[21px] items-center justify-center border border-[#8cc4fb] bg-[#0c0f4a] text-[12px] font-semibold text-[#a5d2fb]">
        Ps
      </span>
    ),
  },
  { n: "pubg", el: Pubg },
  {
    n: "pc",
    el: (
      <Art>
        <path d="M8 1l14 5v10L9 12z" fill="#3ea4e8" stroke="#c6d3dc" strokeWidth=".7" />
        <path d="M12 13l6 2-1 3-6-2z" fill="#8c969d" />
        <path d="M1 18l4-2 12 4-5 2.500z" fill="#dfe4e8" />
      </Art>
    ),
  },
  { n: "chrome-c", el: <Chrome className="size-[23px]" /> },
  {
    n: "anydesk",
    el: (
      <Art>
        <path d="M0 0h24v24H0z" fill="#ff4136" />
        <path d="M9 7l5 5-5 5-5-5z" fill="#fff" />
        <path d="M13 7.800l1.500-1 5 5.200-5 5.200-1.500-1 3.500-4.200z" fill="#fff" />
      </Art>
    ),
  },
  {
    n: "pointer",
    el: (
      <Art>
        <path d="M7.500 2.500a1.800 1.800 0 0 1 3.600 0V9a1.700 1.700 0 0 1 3.200.7 1.700 1.700 0 0 1 3.200.8 1.700 1.700 0 0 1 3.200 1V17c0 3-2 5.500-5 5.500h-4.500c-2 0-3.200-1-4.200-3L4 14.500c-.8-1.600 1.200-2.800 2.300-1.500l1.200 1.500z" fill="#fff" />
      </Art>
    ),
  },
  {
    n: "memu",
    el: (
      <Art>
        <circle cx="12" cy="12" r="12" fill="#5aa8f2" />
        <path d="M2 6a12 12 0 0 1 20 0c-5-3-14-2-16 5-1 4 1 8 4 10C3 20-1 13 2 6z" fill="#c9e6fc" />
        <circle cx="13" cy="11.500" r="6.500" fill="#123c7c" />
        <circle cx="13.500" cy="10" r="4.200" fill="#8fc9f8" />
      </Art>
    ),
  },
  {
    n: "filmora",
    el: (
      <Art>
        <rect x=".7" y=".7" width="22.600" height="22.600" fill="#0e3f40" stroke="#5ba7a2" strokeWidth="1.400" />
        <path d="M4 4v16l13-8z" fill="#3ccbbd" />
        <path d="M16 5h4v4M20 15v4h-4" fill="none" stroke="#3ccbbd" />
      </Art>
    ),
  },
  { n: "xampp", bar: true, el: <Xampp className="size-6" /> },
  {
    n: "sublime",
    bar: true,
    el: (
      <Art>
        <rect width="24" height="24" rx="2" fill="#4b4b4b" />
        <path d="M6 8.500L18 4v4.500l-8 2.800 8 2.700v4L6 21v-4l8-2.500-8-2.500z" fill="#ff9800" />
      </Art>
    ),
  },
  {
    n: "acrobat",
    bar: true,
    on: true,
    el: (
      <Art>
        <rect x="1" y="1" width="22" height="22" rx="3.500" fill="#b30b00" />
        <path d="M6 17.500c2-2.500 5-6 5.500-9.500.3-2.500-1.500-2.500-1.200 0 .5 3 3.500 6.300 7.200 6.500 1.500-.2.500-1.500-1.500-1.300-3.500.3-7.500 1.500-9.500 3-1.500 1.300-.8 1.800-.5 1.300z" fill="none" stroke="#fff" strokeWidth="1.200" />
      </Art>
    ),
  },
];

function Taskbar() {
  return (
    <footer className="flex h-10 bg-linear-to-r from-[#0c0d17] to-[#0c0c0c] text-white">
      <div className="flex w-12 items-center pl-[15px]">
        <Art className="size-[17px]" box="0 0 16 16">
          <path d="M0 2.300L6.600 1.400v6.200H0zM7.400 1.300L16 0v7.600H7.400zM0 8.400h6.600v6.200L0 13.700zM7.400 8.400H16V16l-8.600-1.300z" fill="#fff" />
        </Art>
      </div>
      <div className="flex w-[344px] items-center border-t border-[#b9b9b9] bg-[#f2f2f2] pr-[13px] pl-[9px] text-[#333]">
        <span className="size-[22px] rounded-full border-[3px] border-[#151515]" />
        <span className="ml-[9px] flex-1 text-[15px] tracking-[-0.5px]">Type here to search</span>
        <Line className="h-[18px] w-4" box="0 0 16 18">
          <path d="M5.500 1h5v10h-5zM3 8.500v4.500h10V8.500M8 13v3.500M5.500 16.700h5" />
        </Line>
      </div>
      <div className="flex w-[50px] items-center justify-center pr-0.5">
        <Line className="size-[18px]" box="0 0 18 18" sw={1.200}>
          <path d="M1.500 1v2.500h10V1M1.500 5.500h10v7h-10zM1.500 17v-2.500h10V17M15 1v3M15 11v6" />
          <path d="M13.500 6h3v3.500h-3z" fill="currentColor" stroke="none" />
        </Line>
      </div>
      {taskA.map((t) => (
        <div
          key={t.n}
          className={`relative flex w-[43px] shrink-0 items-center justify-center ${t.n === "opera" ? "bg-[#3b3c40]" : ""}`}
        >
          {t.el}
          {t.bar && <span className={`absolute bottom-0 h-0.5 bg-[#76b9ed] ${t.bar}`} />}
        </div>
      ))}
      {taskB.map((t) => (
        <div key={t.n} className={`relative flex w-[42px] shrink-0 items-center justify-center ${t.on ? "bg-[#3d3d3d]" : ""}`}>
          {t.el}
          {t.bar && <span className={`absolute bottom-0 h-0.5 bg-[#76b9ed] ${t.on ? "w-[42px]" : "w-[33px]"}`} />}
        </div>
      ))}
      <div className="ml-auto flex items-center text-[#f0f0f0]">
        <Line className="mr-[21px] size-4">
          <circle cx="10.500" cy="4" r="2.800" />
          <circle cx="5" cy="8.500" r="2.300" />
          <path d="M1.500 15c0-5 7-5 7 0M7.500 8.500c2-2.500 7.500-2 7.500 2.500" />
        </Line>
        <Line className="mr-2 size-3.5" sw={1.300}>
          <path d="M2 11l6-6 6 6" />
        </Line>
        <Line className="mr-2 size-4">
          <path d="M1 5.500h2.500L7 2.500v11l-3.500-3H1zM9 6c1 1 1 3 0 4M11 4.500c2 2 2 5 0 7M13 3c2.500 3 2.500 7 0 10" />
        </Line>
        <Line className="size-4">
          <path d="M5 3.500h10v7.500H5M10 11v3M6.500 14h7M1 1.500h4v4H1zM3 5.500V14" />
        </Line>
        <div className="mr-px ml-2 w-[56px] text-center text-[12px] leading-[18px] tracking-[-0.5px] whitespace-nowrap">
          <p>3:02 PM</p>
          <p>11/13/2021</p>
        </div>
        <Line className="ml-4 size-[17px]" sw={1.100}>
          <path d="M1 1.500h14v10.500h-4.500L8 14.500 5.500 12H1z" />
        </Line>
        <span className="ml-[19px] h-10 w-px bg-[#555]" />
        <span className="w-[4px]" />
      </div>
    </footer>
  );
}

export default function App() {
  return (
    <div className="flex h-[1080px] w-[1920px] flex-col overflow-hidden font-['Open_Sans','Noto_Sans',sans-serif]">
      <div className="flex h-[1040px]">
        <Sidebar />
        <div className="flex flex-1 flex-col">
          <TabBar />
          <div className="flex h-[70px] flex-col border-b-2 border-[#181b20] bg-[#3b4550]">
            <AddressBar />
            <Bookmarks />
          </div>
          <PageBody />
        </div>
      </div>
      <Taskbar />
    </div>
  );
}
